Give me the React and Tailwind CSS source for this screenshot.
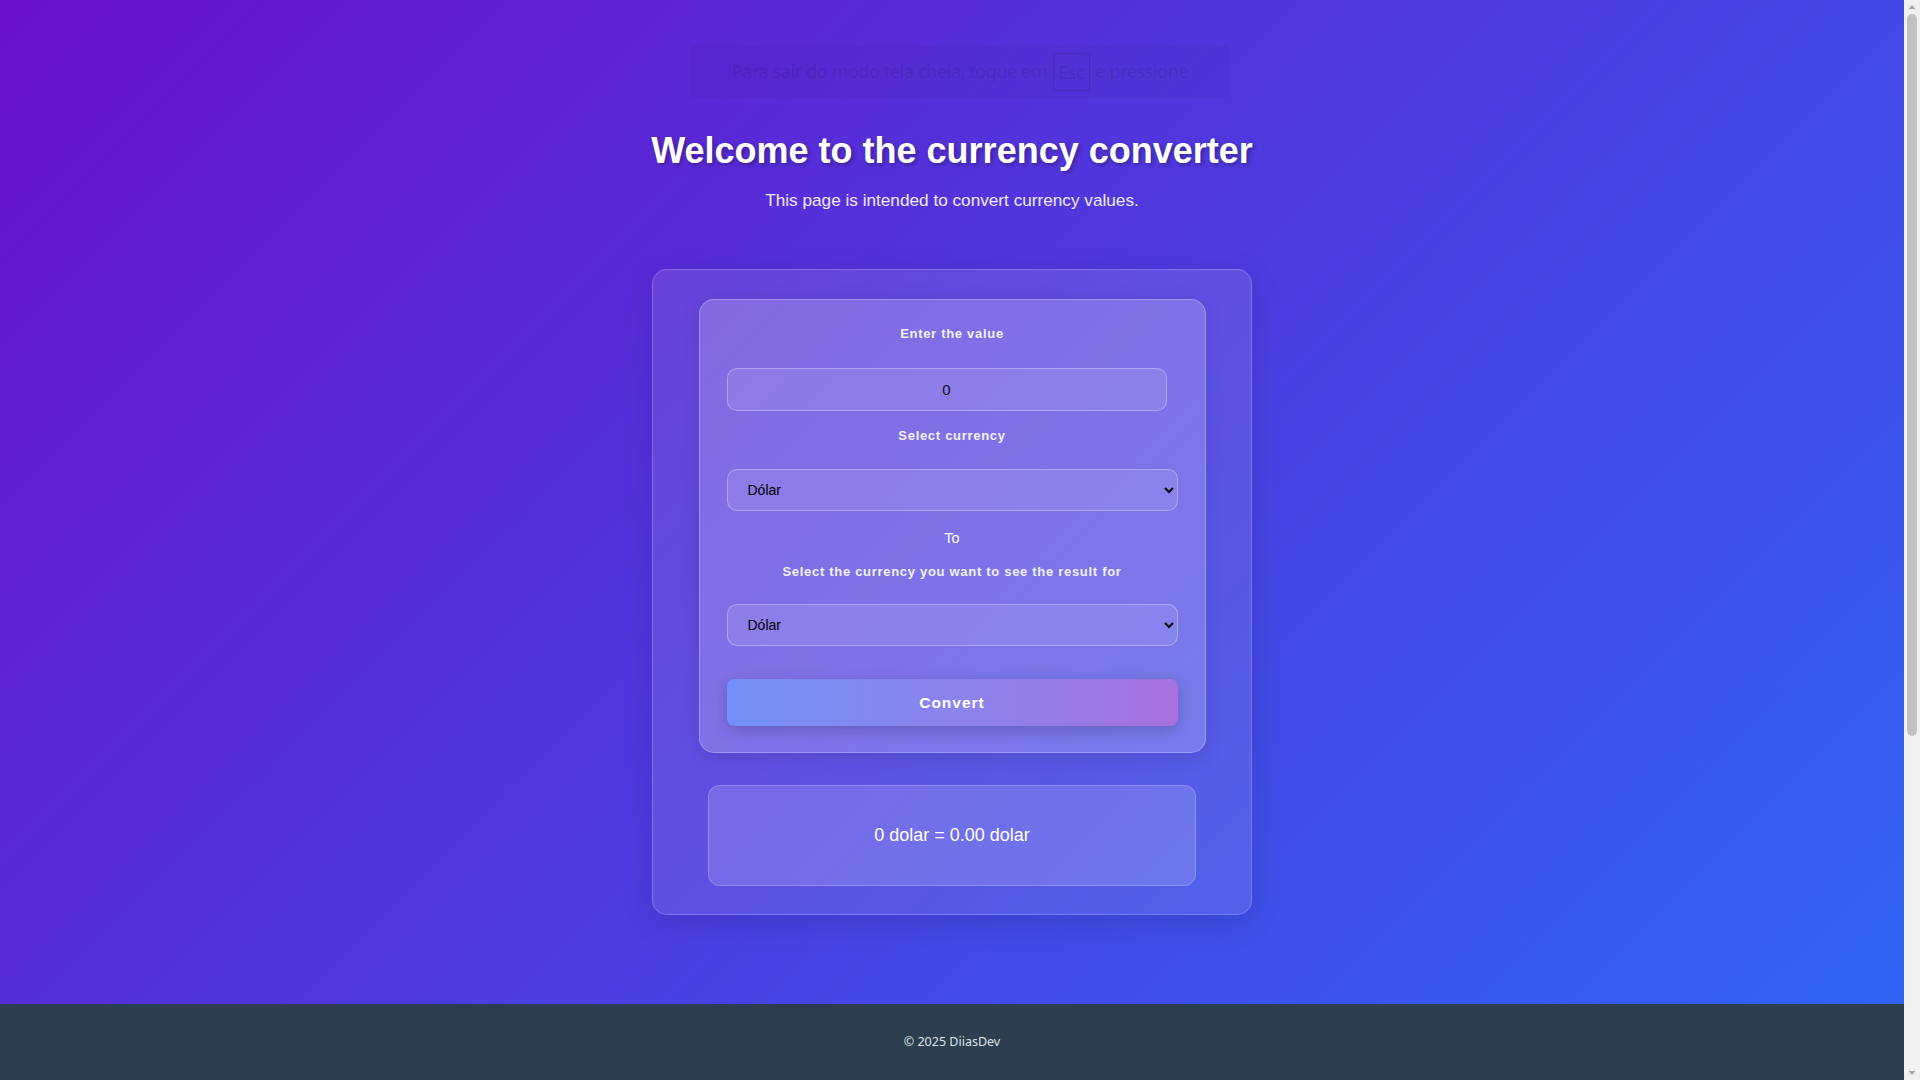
import React, { useState } from 'react';

const rates = { dolar: 1, euro: 1, real: 1 };

function FakeScrollbar() {
  // the page in the shot is taller than the window, so the browser shows a scrollbar
  return (
    <div className="w-[16px] h-[1080px] shrink-0 bg-[#f1f1f1] flex flex-col items-center">
      <svg width="16" height="14" viewBox="0 0 16 14" className="shrink-0">
        <path d="M4.5 9 L8 5 L11.5 9 Z" fill="#a3a3a3" />
      </svg>
      <div className="w-[10px] h-[722px] rounded-full bg-[#c1c1c1]" />
      <div className="flex-1" />
      <svg width="16" height="14" viewBox="0 0 16 14" className="shrink-0">
        <path d="M4.5 5 L8 9 L11.5 5 Z" fill="#a3a3a3" />
      </svg>
    </div>
  );
}

export default function App() {
  const [value, setValue] = useState('0');
  const [from, setFrom] = useState('dolar');
  const [to, setTo] = useState('dolar');
  const [result, setResult] = useState({ amount: 0, from: 'dolar', to: 'dolar', out: 0 });

  const convert = () => {
    const amount = Number(value) || 0;
    setResult({ amount, from, to, out: (amount * rates[from]) / rates[to] });
  };

  return (
    <div className="flex h-screen overflow-hidden font-['Liberation_Sans',Arial,sans-serif]">
      <div className="flex-1 min-w-0 h-[1565px] flex flex-col bg-[linear-gradient(135deg,#6a11cb_0%,#2575fc_100%)]">
        <main className="relative h-[1004px] shrink-0 flex flex-col items-center pt-[129px]">
          {/* faded fullscreen notice, centred on the whole window */}
          <div className="absolute top-[45px] left-[calc(50%+8px)] -translate-x-1/2 w-[540px] h-[53px] rounded-md bg-black/[0.03] flex items-center justify-center gap-[6px] font-['Noto_Sans','Open_Sans',sans-serif] text-[18px] tracking-[-0.4px] text-black/[0.1]">
            <span>Para sair do modo tela cheia, toque em</span>
            <span className="border border-black/[0.12] rounded-sm px-[4px] py-[5px] leading-[26px]">Esc</span>
            <span>e pressione</span>
          </div>

          <h1 className="text-[36px] leading-[44px] font-bold text-white [text-shadow:2px_2px_4px_rgba(0,0,0,0.3)]">
            Welcome to the currency converter
          </h1>
          <p className="mt-[15px] text-[17.2px] leading-[24px] text-white/90">
            This page is intended to convert currency values.
          </p>

          <section className="mt-[57px] w-[600px] rounded-[15px] border border-white/20 bg-white/10 shadow-[0_8px_32px_rgba(0,0,0,0.12)] pt-[29px] pb-[28px] flex flex-col items-center">
            <div className="w-[507px] rounded-[15px] border border-white/25 bg-white/20 shadow-[0_4px_20px_rgba(0,0,0,0.12)] px-[27px] pt-[26px] pb-[26px] flex flex-col">
              <label className="text-center text-[13px] leading-[16px] font-bold tracking-[0.7px] text-white/90">
                Enter the value
              </label>
              <input
                type="text"
                inputMode="decimal"
                value={value}
                onChange={(e) => setValue(e.target.value)}
                className="mt-[26px] w-[440px] h-[43px] rounded-[10px] border border-white/30 bg-white/10 text-center text-[15px] text-[#111] outline-none"
              />
              <label className="mt-[17px] text-center text-[13px] leading-[16px] font-bold tracking-[0.7px] text-white/90">
                Select currency
              </label>
              <select
                value={from}
                onChange={(e) => setFrom(e.target.value)}
                className="mt-[25px] w-full h-[42px] rounded-[10px] border border-white/30 bg-white/10 pl-[16px] pr-[8px] text-[14px] text-black outline-none"
              >
                <option value="dolar">Dólar</option>
                <option value="euro">Euro</option>
                <option value="real">Real</option>
              </select>
              <p className="mt-[18px] text-center text-[14.5px] leading-[18px] text-white">To</p>
              <label className="mt-[17px] text-center text-[13px] leading-[16px] font-bold tracking-[0.7px] text-white/90">
                Select the currency you want to see the result for
              </label>
              <select
                value={to}
                onChange={(e) => setTo(e.target.value)}
                className="mt-[24px] w-full h-[42px] rounded-[10px] border border-white/30 bg-white/10 pl-[16px] pr-[8px] text-[14px] text-black outline-none"
              >
                <option value="dolar">Dólar</option>
                <option value="euro">Euro</option>
                <option value="real">Real</option>
              </select>
              <button
                onClick={convert}
                className="mt-[33px] w-full h-[47px] rounded-[8px] bg-[linear-gradient(90deg,#7491f9_0%,#8a84ec_50%,#a671de_100%)] shadow-[0_4px_15px_rgba(0,0,0,0.2)] text-[15.5px] font-bold tracking-[1px] text-white"
              >
                Convert
              </button>
            </div>

            <div className="mt-[32px] w-[488px] h-[101px] rounded-[12px] border border-white/20 bg-white/15 flex items-center justify-center">
              <p className="text-[18px] text-white">
                {result.amount} {result.from} = {result.out.toFixed(2)} {result.to}
              </p>
            </div>
          </section>
        </main>

        <footer className="bg-[#2c3e50] h-[76px] shrink-0 flex items-center justify-center">
          <p className="font-['Noto_Sans','Open_Sans',sans-serif] text-[12.5px] text-[#dfe3e7]">© 2025 DiiasDev</p>
        </footer>
      </div>
      <FakeScrollbar />
    </div>
  );
}
